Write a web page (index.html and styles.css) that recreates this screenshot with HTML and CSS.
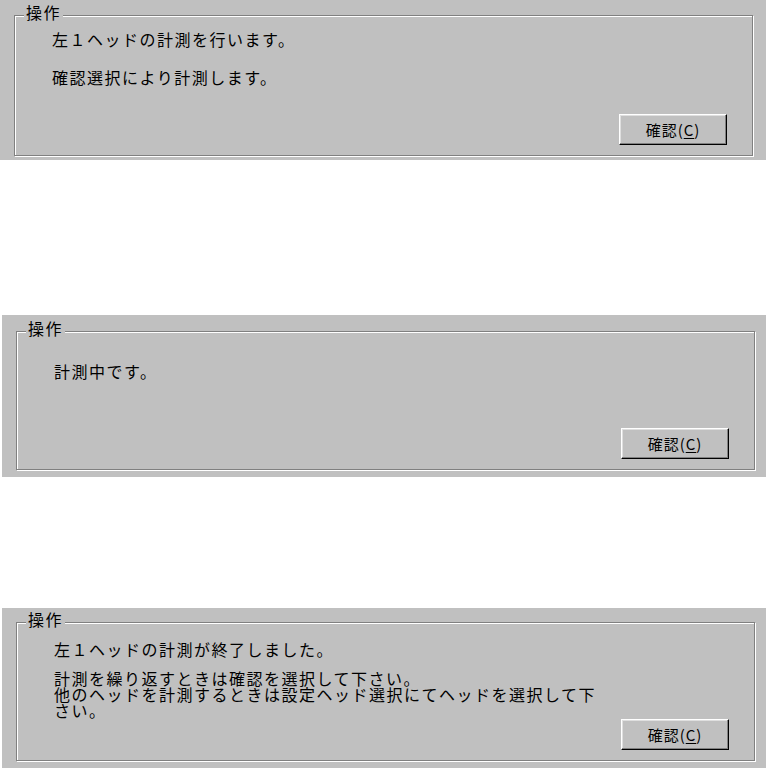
FILE: index.html
```html
<!DOCTYPE html>
<html lang="ja">
<head>
<meta charset="utf-8">
<title>操作</title>
<link rel="stylesheet" href="styles.css">
</head>
<body>
  <section class="panel panel-1">
    <div class="group group-1">
      <span class="legend">操作</span>
      <p class="msg">左１ヘッドの計測を行います。</p>
      <p class="msg msg-2a">確認選択により計測します。</p>
      <div class="actions"><button class="btn" type="button">確認(<u>C</u>)</button></div>
    </div>
  </section>

  <section class="panel panel-2">
    <div class="group group-2">
      <span class="legend">操作</span>
      <p class="msg">計測中です。</p>
      <div class="actions"><button class="btn" type="button">確認(<u>C</u>)</button></div>
    </div>
  </section>

  <section class="panel panel-3">
    <div class="group group-3">
      <span class="legend">操作</span>
      <p class="msg">左１ヘッドの計測が終了しました。</p>
      <p class="msg msg-2b msg-wrap">計測を繰り返すときは確認を選択して下さい。<br>他のヘッドを計測するときは設定ヘッド選択にてヘッドを選択して下さい。</p>
      <div class="actions"><button class="btn" type="button">確認(<u>C</u>)</button></div>
    </div>
  </section>
</body>
</html>
```
FILE: styles.css
```css
html {
  margin: 0;
  overflow: hidden;
  background: #ffffff;
}

body {
  margin: 0;
  width: 766px;
  height: 768px;
  overflow: hidden;
  background: #ffffff;
  color: #000000;
  font-family: "Noto Sans CJK JP", "Noto Sans", sans-serif;
  font-size: 16px;
  line-height: 15px;
  letter-spacing: 1.5px;
}

.panel {
  box-sizing: border-box;
  width: 767px;
  padding: 0 14px;
  background: #c0c0c0;
}

.panel-1 {
  height: 160px;
  padding-top: 15px;
}

.panel-2 {
  height: 162px;
  margin-top: 155px;
  margin-left: 2px;
  padding-top: 16px;
}

.panel-3 {
  height: 162px;
  margin-top: 131px;
  margin-left: 2px;
  padding-top: 14px;
}

.group {
  position: relative;
  box-sizing: border-box;
  display: flex;
  flex-direction: column;
  border: 1px solid #808080;
  box-shadow: inset 1px 1px 0 #ffffff, 1px 1px 0 #ffffff;
  padding: 0 25px 10px 37px;
}

.group-1 {
  height: 141px;
  padding-top: 16px;
}

.group-2 {
  height: 139px;
  padding-top: 32px;
}

.group-3 {
  height: 139px;
  padding-top: 19px;
}

.legend {
  position: absolute;
  top: -11px;
  left: 9px;
  padding: 0 2px;
  background: #c0c0c0;
}

.msg {
  margin: 0;
  white-space: nowrap;
}

.msg-2a {
  margin-top: 23px;
}

.msg-2b {
  margin-top: 13px;
}

.msg-wrap {
  width: 550px;
  white-space: normal;
  line-height: 16px;
}

.actions {
  margin-top: auto;
  display: flex;
  justify-content: flex-end;
}

.btn {
  box-sizing: border-box;
  width: 108px;
  height: 31px;
  padding: 0;
  background: #c0c0c0;
  color: #000000;
  border: 1px solid;
  border-color: #ffffff #000000 #000000 #ffffff;
  box-shadow: inset -1px -1px 0 #808080, inset 1px 1px 0 #dfdfdf;
  font-family: inherit;
  font-size: 15px;
  line-height: 15px;
  letter-spacing: 1px;
}

.btn u {
  text-underline-offset: 2px;
}
```
